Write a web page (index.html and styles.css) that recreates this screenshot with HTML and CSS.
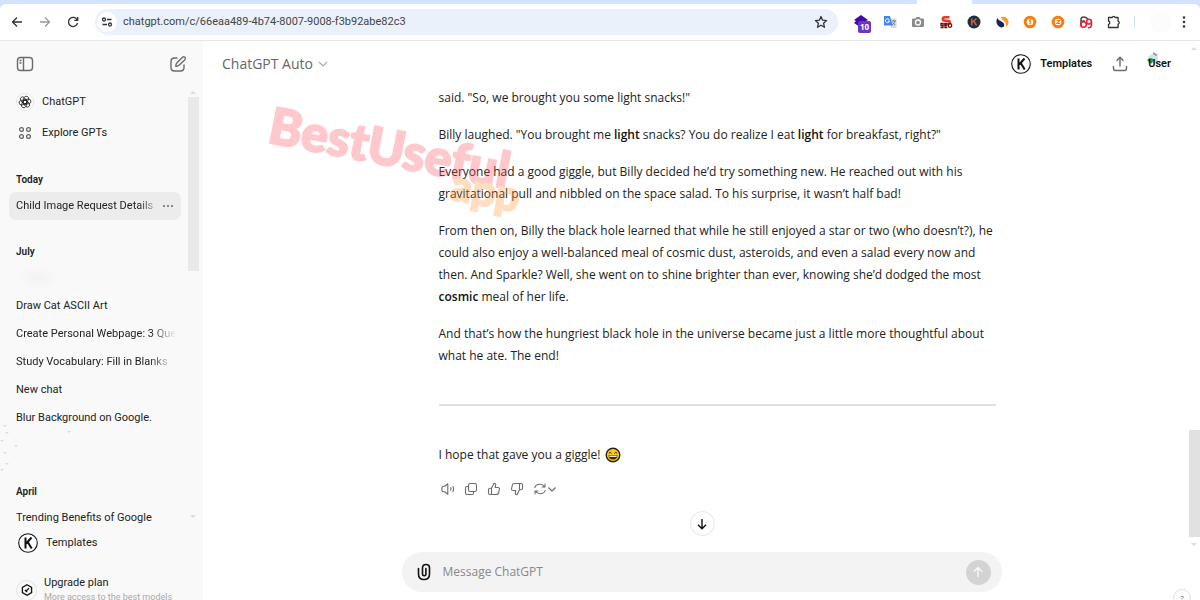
FILE: index.html
```html
<!DOCTYPE html>
<html lang="en">
<head>
<meta charset="utf-8">
<title>ChatGPT</title>
<link rel="stylesheet" href="styles.css">
</head>
<body>
<header class="browser">
  <div class="tabstrip"><span class="tab"></span></div>
  <div class="toolbar">
    <button class="tool" aria-label="Back"><svg width="12" height="12" viewBox="0 0 12 12"><path class="ln" d="M11 6H1.5M6 1.5 1.5 6 6 10.5"/></svg></button>
    <button class="tool dim" aria-label="Forward"><svg width="12" height="12" viewBox="0 0 12 12"><path class="ln" d="M1 6h9.500M6 1.500 10.500 6 6 10.500"/></svg></button>
    <button class="tool" aria-label="Reload"><svg width="12" height="12" viewBox="0 0 12 12"><path class="ln" d="M10.300 4A4.600 4.600 0 1 0 10.600 7M10.700 1v3.400H7.300"/></svg></button>
    <div class="address">
      <button class="site" aria-label="Site information"><svg width="12" height="12" viewBox="0 0 12 12"><g class="ln"><circle cx="3" cy="3.500" r="1.500"/><path d="M6 3.500h4.500M1.500 8.500H6"/><circle cx="9" cy="8.500" r="1.500"/></g></svg></button>
      <input class="url" type="text" aria-label="Address" value="chatgpt.com/c/66eaa489-4b74-8007-9008-f3b92abe82c3">
      <button class="star" aria-label="Bookmark"><svg width="14" height="14" viewBox="0 0 14 14"><path class="ln" d="m7 1.500 1.600 3.700 4 .4-3 2.700.9 4L7 10.200l-3.500 2.100.9-4-3-2.700 4-.4z"/></svg></button>
    </div>
    <div class="extensions">
      <button class="ext" aria-label="Layers, 10"><svg width="20" height="20" viewBox="0 0 20 20"><path fill="#4109a8" d="m9 3 7 5-2 1 2 2-8 4-6-4 2-2-2-1z"/></svg><span class="badge">10</span></button>
      <button class="ext" aria-label="Translate"><svg width="14" height="14" viewBox="0 0 14 14"><path fill="#d5d8dc" d="M6 3.500h7.500V13H8z"/><path fill="#4285f4" d="M1 1h6l2.500 9.500H1z"/><path d="M6.300 4.800A2 2 0 1 0 6.500 6H4.800" fill="none" stroke="#fff"/><path d="M8.500 6H13M10.700 5v1M12 6c-.5 2-2 3.500-3 4M9.700 7.500c.5 1 1.500 2 2.500 2.500" fill="none" stroke="#5f7390" stroke-width=".8"/></svg></button>
      <button class="ext" aria-label="Screenshot"><svg width="14" height="14" viewBox="0 0 14 14"><path fill="#8c8c8c" d="M2 3.500h2.500L5.500 2h3l1 1.500H12q1 0 1 1V11q0 1-1 1H2q-1 0-1-1V4.500q0-1 1-1z"/><circle cx="7" cy="7.500" r="2.500" fill="#8c8c8c" stroke="#fff" stroke-width="1.300"/></svg></button>
      <button class="ext" aria-label="SEO"><svg width="14" height="14" viewBox="0 0 14 14"><path d="M10.500 2.300H6Q3.800 2.300 3.800 4T6 5.800h2.500q2.200 0 2.200 1.700T8.500 9.200H3.500" fill="none" stroke="#e23a2c" stroke-width="2.600"/><path d="M4.300 8.500H2v2h2v2H1.500M8.300 8.500H6v4h2.300M6 10.500h2" fill="none" stroke="#5d1510" stroke-width="1.300"/><circle cx="11" cy="10.500" r="1.800" fill="none" stroke="#5d1510" stroke-width="1.300"/></svg></button>
      <button class="ext" aria-label="Keywords"><svg width="14" height="14" viewBox="0 0 14 14"><circle cx="7" cy="7" r="6.500" fill="#22303d"/><path d="M4.800 3.500v7M9.500 3.500 5.300 7.300M6.800 6l2.700 4.500" fill="none" stroke="#d0574b" stroke-width="1.500"/></svg></button>
      <button class="ext" aria-label="Traffic"><svg width="14" height="14" viewBox="0 0 14 14"><path fill="#192454" d="M2.500 3Q0 7 3 10.500t6 1Q10 8 6.500 6.500T2.500 3z"/><path fill="#fb9a1d" d="M6 2q5-1.500 7 3t-2.500 7Q12 8 9 6T6 2z"/></svg></button>
      <button class="ext" aria-label="Counter 1"><svg width="14" height="14" viewBox="0 0 14 14"><circle cx="7" cy="7" r="4.800" fill="#fff" stroke="#fb7b0b" stroke-width="3"/><path d="m6 6 1.200-1v4.500" fill="none" stroke="#fb7b0b" stroke-width="1.200"/></svg></button>
      <button class="ext" aria-label="Counter 2"><svg width="14" height="14" viewBox="0 0 14 14"><circle cx="7" cy="7" r="4.800" fill="#fff" stroke="#fb7b0b" stroke-width="3"/><path d="M5.500 5.500h3L6 8.500h3" fill="none" stroke="#fb7b0b" stroke-width="1.200"/></svg></button>
      <button class="ext" aria-label="Marks"><svg width="14" height="14" viewBox="0 0 14 14"><path d="M2 11V4.500Q2 2 4.500 2T9 4" fill="none" stroke="#55414a" stroke-width="1.500"/><circle cx="4.500" cy="9.500" r="2.800" fill="none" stroke="#eb1d32" stroke-width="1.500"/><circle cx="10" cy="6.700" r="2.400" fill="none" stroke="#eb1d32" stroke-width="1.500"/><path d="M2 6h4" stroke="#55414a" stroke-width="1.300"/><path d="M12.500 6v4q0 2.800-3.500 2.700" fill="none" stroke="#eb1d32" stroke-width="1.500"/></svg></button>
      <button class="ext" aria-label="Extensions"><svg width="14" height="14" viewBox="0 0 14 14"><path class="ln" d="M1.500 2.500h3.700a1.500 1.500 0 0 1 2.900 0h3v3.700a1.500 1.500 0 0 1 0 2.900v3.400H1.500V9.300a1.700 1.700 0 0 0 0-3.300z"/></svg></button>
    </div>
    <span class="rule"></span>
    <button class="profile" aria-label="Profile"></button>
    <button class="tool menu" aria-label="Menu"><svg width="4" height="14" viewBox="0 0 4 14"><g fill="#333"><circle cx="2" cy="2.500" r="1.300"/><circle cx="2" cy="7" r="1.300"/><circle cx="2" cy="11.500" r="1.300"/></g></svg></button>
  </div>
</header>
<div class="app">
  <aside class="sidebar">
    <div class="side-head">
      <button aria-label="Close sidebar"><svg width="18" height="18" viewBox="0 0 18 18"><g class="ln grey"><rect x="1.500" y="2.500" width="15" height="13" rx="3"/><path d="M7.500 2.500v13M3.500 5.500h2M3.500 8h2"/></g></svg></button>
      <button aria-label="New chat"><svg width="18" height="18" viewBox="0 0 18 18"><g class="ln grey"><path d="M8.500 3H5.500Q2 3 2 6.500v6Q2 16 5.500 16h6q3.500 0 3.500-3.500V9.500"/><path d="M6.800 11.200q0-2.200 1-3.200L13.500 2.300a1.700 1.700 0 0 1 2.400 2.400L10 10.300q-1 1-3.200.9z"/></g></svg></button>
    </div>
    <nav class="history">
      <a class="link" href="#"><span class="logo"><svg width="14" height="14" viewBox="0 0 14 14"><g fill="none" stroke="#222" stroke-width=".8"><rect id="p" x="4.700" y="1" width="4.600" height="7.800" rx="2.300" transform="rotate(20 7 7)"/><use href="#p" transform="rotate(60 7 7)"/><use href="#p" transform="rotate(120 7 7)"/><use href="#p" transform="rotate(180 7 7)"/><use href="#p" transform="rotate(240 7 7)"/><use href="#p" transform="rotate(300 7 7)"/></g></svg></span>ChatGPT</a>
      <a class="link" href="#"><span class="grid"><svg width="14" height="14" viewBox="0 0 14 14"><g fill="none" stroke="#5d5d5d" stroke-width="1.200"><circle cx="3.500" cy="3.500" r="1.900"/><circle cx="10.500" cy="3.500" r="1.900"/><circle cx="3.500" cy="10.500" r="1.900"/><circle cx="10.500" cy="10.500" r="1.900"/></g></svg></span>Explore GPTs</a>
      <section class="group">
        <h3>Today</h3>
        <div class="chat active"><a class="fade" href="#">Child Image Request Details</a><button aria-label="Options"><svg width="12" height="4" viewBox="0 0 12 4"><g fill="#666"><circle cx="2" cy="2" r="1"/><circle cx="6" cy="2" r="1"/><circle cx="10" cy="2" r="1"/></g></svg></button></div>
      </section>
      <section class="group">
        <h3>July</h3>
        <div class="chat"><span class="smudge"></span></div>
        <div class="chat"><a href="#">Draw Cat ASCII Art</a></div>
        <div class="chat"><a class="fade" href="#">Create Personal Webpage: 3 Que</a></div>
        <div class="chat"><a class="fade" href="#">Study Vocabulary: Fill in Blanks</a></div>
        <div class="chat"><a href="#">New chat</a></div>
        <div class="chat"><a href="#">Blur Background on Google.</a></div>
        <div class="chat"><svg class="specks" width="120" height="50" viewBox="0 0 120 50"><g fill="#dcdcdc"><path d="M3 4h4l-2 2zM5 11h4l-2 2zM0 19h4l-2 2zM14 24h4l-2 2zM3 31h4l-2 2zM5 42h4l-2 2zM0 48h4l-2 2zM67 10h4l-2 2z"/></g></svg></div>
      </section>
      <section class="group">
        <h3>April</h3>
        <div class="chat"><a href="#">Trending Benefits of Google</a></div>
      </section>
      <span class="side-up"></span><span class="side-thumb"></span><span class="side-down"></span>
    </nav>
    <div class="side-foot">
      <a class="foot-link" href="#"><svg width="20" height="20" viewBox="0 0 20 20"><circle cx="10" cy="10" r="9.300" fill="#fff" stroke="#111" stroke-width="1.100"/><path d="M7.500 4.500v11M13.500 4.500 8.300 10.500M9.700 9l4 6.500" fill="none" stroke="#111" stroke-width="2"/></svg>Templates</a>
      <a class="plan" href="#"><span class="plan-icon"><svg width="12" height="12" viewBox="0 0 12 12"><path d="m6 .8 4.600 2.600v5.200L6 11.200 1.400 8.600V3.400z" fill="none" stroke="#111" stroke-width="1.300"/><path d="M4.500 7.500 8 4.200M3.800 5.800l2.400 2.400" fill="none" stroke="#111" stroke-width="1.200"/></svg></span><span><b>Upgrade plan</b><small>More access to the best models</small></span></a>
    </div>
  </aside>
  <main class="main">
    <div class="top">
      <button class="model">ChatGPT Auto<svg width="10" height="10" viewBox="0 0 10 10"><path d="m1 3 4 4 4-4" fill="none" stroke="#aaa" stroke-width="1.200"/></svg></button>
      <div class="top-right">
        <button class="templates"><svg width="20" height="20" viewBox="0 0 20 20"><circle cx="10" cy="10" r="9.300" fill="#fff" stroke="#111" stroke-width="1.100"/><path d="M7.500 4.500v11M13.500 4.500 8.300 10.500M9.700 9l4 6.500" fill="none" stroke="#111" stroke-width="2"/></svg>Templates</button>
        <button aria-label="Share"><svg width="16" height="16" viewBox="0 0 16 16"><path class="ln grey" d="M8 10.500v-9M4.500 4.700 8 1.200l3.500 3.500M1.500 10v2.500q0 2 2 2h9q2 0 2-2V10"/></svg></button>
        <button class="user"><svg width="14" height="14" viewBox="0 0 14 14"><path fill="#cfe2f6" d="M2 6q5-6 10 0v6H2z"/><path fill="#999" d="m7 1 5 3-2 1-3-2z"/><path fill="#2e9a3a" d="M1 9q4-4 7 0l-3 4z"/></svg>User</button>
      </div>
    </div>
    <div class="watermark" aria-hidden="true"><span>BestUseful</span><span class="sub">app</span></div>
    <article class="thread">
      <p>said. "So, we brought you some light snacks!"</p>
      <p>Billy laughed. "You brought me <strong>light</strong> snacks? You do realize I eat <strong>light</strong> for breakfast, right?"</p>
      <p>Everyone had a good giggle, but Billy decided he’d try something new. He reached out with his<br>gravitational pull and nibbled on the space salad. To his surprise, it wasn’t half bad!</p>
      <p>From then on, Billy the black hole learned that while he still enjoyed a star or two (who doesn’t?), he<br>could also enjoy a well-balanced meal of cosmic dust, asteroids, and even a salad every now and<br>then. And Sparkle? Well, she went on to shine brighter than ever, knowing she’d dodged the most<br><strong>cosmic</strong> meal of her life.</p>
      <p>And that’s how the hungriest black hole in the universe became just a little more thoughtful about<br>what he ate. The end!</p>
      <hr>
      <p class="closing">I hope that gave you a giggle! <svg width="16" height="16" viewBox="0 0 16 16" role="img" aria-label="Grinning face"><circle cx="8" cy="8" r="6.800" fill="#fcc821" stroke="#2b2410" stroke-width="1.400"/><path d="M3.500 8.300h9q0 4.200-4.500 4.200T3.500 8.300z" fill="#3b2a18"/><path d="M4.300 8.700h7.400v1.200H4.300z" fill="#fff"/><path d="M3.800 6.300q1.400-1.800 2.800 0M9.400 6.300q1.400-1.800 2.800 0" fill="none" stroke="#3b2a18"/></svg></p>
      <div class="actions">
        <button aria-label="Read aloud"><svg width="14" height="14" viewBox="0 0 14 14"><path class="ln thin" d="M6.800 1.800v10.400L3.700 9.800H2.500Q.8 9.800.8 7t1.700-2.800h1.200zM9.500 5.300q.9 1.700 0 3.400M11.700 4q1.700 3 0 6"/></svg></button>
        <button aria-label="Copy"><svg width="14" height="14" viewBox="0 0 14 14"><g class="ln thin"><rect x="4.500" y="1.500" width="8" height="8" rx="1.800"/><path d="M4.500 4.500H3q-1.500 0-1.500 1.500v5q0 1.500 1.500 1.500h5q1.500 0 1.500-1.500V9.500"/></g></svg></button>
        <button aria-label="Good response"><svg width="14" height="14" viewBox="0 0 14 14"><path class="ln thin" d="M4.500 6.200 7 1.300q2 .2 1.700 2L8.200 5.500h2.600q2 0 1.600 2l-.8 3.500q-.4 1.500-2 1.500H3Q1.500 12.500 1.500 11V7.700q0-1.500 1.500-1.500h1.500v6.300"/></svg></button>
        <button aria-label="Bad response"><svg width="14" height="14" viewBox="0 0 14 14"><path class="ln thin" d="M9.500 7.800 7 12.700q-2-.2-1.700-2l.5-2.200H3.200q-2 0-1.600-2L2.400 3q.4-1.500 2-1.500H11q1.500 0 1.500 1.500v3.300q0 1.500-1.500 1.500H9.500V1.500"/></svg></button>
        <button class="regen" aria-label="Regenerate"><svg width="14" height="14" viewBox="0 0 14 14"><path class="ln thin" d="M1.700 6Q2.500 2.300 7 2.300q3 0 4.700 2.700M12 1.700V5H8.700M12.300 8q-.8 3.700-5.300 3.700-3 0-4.700-2.700M2 12.300V9h3.300"/></svg><svg width="10" height="10" viewBox="0 0 10 10"><path class="ln thin" d="m1.500 3.500 3.500 3.500 3.500-3.500"/></svg></button>
      </div>
    </article>
    <div class="bottom">
      <button class="down" aria-label="Scroll to bottom"><svg width="12" height="12" viewBox="0 0 12 12"><path d="M6 1v9.500M2 6.800l4 4 4-4" fill="none" stroke="#111" stroke-width="1.400"/></svg></button>
      <form class="composer">
        <button type="button" aria-label="Attach"><svg width="14" height="18" viewBox="0 0 14 18"><path d="M1.500 5.500V11q0 5.500 5.500 5.500t5.500-5.500V5q0-3.500-3.500-3.500T5.500 5v6q0 1.700 1.700 1.700T8.900 11V5.500" fill="none" stroke="#111" stroke-width="1.600" stroke-linecap="round"/></svg></button>
        <input type="text" aria-label="Message" placeholder="Message ChatGPT">
        <button class="send" type="button" aria-label="Send"><svg width="12" height="12" viewBox="0 0 12 12"><path d="M6 11V1.500M1.800 5.700 6 1.500l4.200 4.200" fill="none" stroke="#f8f8f8" stroke-width="1.500"/></svg></button>
      </form>
    </div>
    <span class="scroll-up"></span><span class="main-thumb"></span><span class="scroll-down"></span>
    <button class="help">?</button>
  </main>
</div>
</body>
</html>
```
FILE: styles.css
```css
* { box-sizing: border-box; }
body { margin: 0; height: 100vh; display: flex; flex-direction: column; overflow: hidden; font: 12px/22px "Open Sans", "Noto Sans", sans-serif; color: #222; background: #fff; }
button { border: 0; padding: 0; background: none; font: inherit; color: inherit; display: flex; align-items: center; justify-content: center; }
input { border: 0; padding: 0; background: none; font: inherit; color: inherit; min-width: 0; flex: 1; outline: 0; }
a { color: inherit; text-decoration: none; }
svg { display: block; flex: none; }
h3, p { margin: 0; }
.ln { fill: none; stroke: #333; stroke-width: 1.3; stroke-linejoin: round; }
.grey { stroke: #6b6b6b; stroke-width: 1.4; }
.thin { stroke: #6b6b6b; stroke-width: 1.1; }

.browser { background: #d3e3fd; border-bottom: 1px solid #e6e7e9; }
.tabstrip { height: 4px; display: flex; justify-content: flex-end; padding-right: 228px; }
.tab { width: 55px; background: #fff; }
.toolbar { height: 36px; display: flex; align-items: center; background: #fff; border-radius: 6px 6px 0 0; padding: 0 14px 0 11px; }
.tool { width: 12px; margin-right: 16px; }
.dim { opacity: .5; }
.address { flex: 1; height: 26px; display: flex; align-items: center; background: #ebf1fb; border-radius: 13px; padding: 0 10px 0 2px; }
.site { width: 20px; height: 20px; border-radius: 50%; background: #fff; }
.url { font-family: Roboto, sans-serif; font-size: 11px; margin-left: 6px; color: #444; }
.extensions { display: flex; gap: 8px; margin-left: 14px; }
.ext { width: 20px; height: 20px; position: relative; }
.badge { position: absolute; left: 6px; top: 9px; width: 13px; height: 12px; border-radius: 2px; background: #6a35c2; color: #fff; font: 700 8px/12px "Open Sans", sans-serif; text-align: center; }
.rule { width: 1px; height: 12px; background: #cfe0f8; margin-left: 10px; }
.profile { width: 22px; height: 22px; border-radius: 50%; background: #fcfcfc; margin: 0 10px 0 15px; }
.menu { width: 4px; margin: 0; }

.app { flex: 1; min-height: 0; display: flex; }
.sidebar { width: 203px; flex: none; display: flex; flex-direction: column; background: #f9f9f9; font-family: Roboto, sans-serif; font-size: 11px; line-height: 16px; }
.side-head { height: 45px; display: flex; align-items: center; justify-content: space-between; padding: 0 16px; }
.history { flex: 1; min-height: 0; overflow: hidden; position: relative; padding: 0 22px 0 9px; }
.link { height: 31px; display: flex; align-items: center; gap: 8px; padding-left: 7px; }
.logo, .grid { width: 18px; height: 18px; display: grid; place-items: center; border-radius: 50%; }
.logo { border: 1px solid #e5e5e5; background: #fff; }
.group { padding-top: 18px; }
.group h3 { font-size: 10px; font-weight: 600; line-height: 20px; padding: 4px 7px 2px; }
.chat { height: 28px; display: flex; align-items: center; padding: 0 7px; border-radius: 7px; white-space: nowrap; }
.active { background: #ececec; }
.active button { width: 14px; margin-left: 8px; }
.fade { flex: 1; mask-image: linear-gradient(90deg, #000 84%, transparent); }
.active .fade { mask-image: linear-gradient(90deg, #000 90%, transparent 105%); }
.specks { margin-left: -16px; }
.smudge { width: 44px; height: 26px; background: radial-gradient(#f3f3f3, #f9f9f9 70%); }
.side-thumb { position: absolute; right: 4px; top: 11px; width: 11px; height: 174px; background: #e9e9e9; }
.side-foot { flex: 0 0 77px; overflow: hidden; }
.foot-link { height: 40px; display: flex; align-items: center; gap: 8px; padding-left: 18px; }
.plan { display: flex; align-items: center; gap: 7px; padding: 13px 0 0 16px; }
.plan-icon { width: 21px; height: 21px; display: grid; place-items: center; border: 1px solid #e3e3e3; border-radius: 50%; flex: none; }
.plan b, .plan small { display: block; font-weight: 400; line-height: 14px; white-space: nowrap; }
.plan small { font-size: 9px; color: #aaa; }

.main { flex: 1; min-width: 0; position: relative; display: flex; flex-direction: column; }
.top { height: 46px; flex: none; display: flex; align-items: center; justify-content: space-between; padding: 0 29px 0 19px; }
.model { gap: 5px; font-size: 14px; font-weight: 500; color: #666; }
.top-right { display: flex; align-items: center; gap: 20px; font: 600 11px/22px Roboto, sans-serif; color: #111; }
.templates { gap: 9px; }
.user { position: relative; }
.user svg { position: absolute; left: -2px; top: -2px; z-index: -1; }
.thread { flex: 1; min-height: 0; width: 600px; max-width: 100%; margin: 0 auto; padding: 0 6px 0 37px; white-space: nowrap; }
.thread p { margin-bottom: 15px; }
.thread strong { font-weight: 600; color: #111; }
.thread hr { border: 0; height: 2px; background: #e0e0e0; margin: 37px 0 38px; }
.closing { display: flex; align-items: center; gap: 5px; }
.thread .closing { margin-bottom: 16px; }
.actions { display: flex; gap: 9px; margin-left: 2px; }
.bottom { position: relative; width: 600px; max-width: 100%; margin: 0 auto 8px; }
.down { position: absolute; left: 50%; bottom: 56px; width: 25px; height: 25px; margin-left: -12px; border: 1px solid #e5e5e5; border-radius: 50%; background: #fff; }
.composer { height: 40px; display: flex; align-items: center; gap: 12px; padding: 0 11px 0 15px; border-radius: 20px; background: #f3f3f3; }
.composer input::placeholder { color: #888; opacity: 1; }
.send { width: 25px; height: 25px; border-radius: 50%; background: #d3d3d3; }
.main-thumb { position: absolute; right: 0; bottom: 63px; width: 11px; height: 107px; background: #e1e1e1; }
.scroll-up, .scroll-down, .side-up, .side-down { position: absolute; right: 3px; border: 3px solid transparent; border-top: 0; border-bottom-color: #ddd; }
.scroll-up { top: 6px; }
.scroll-down { bottom: 54px; transform: rotate(180deg); }
.side-up { right: 7px; top: 5px; }
.side-down { right: 7px; bottom: 5px; transform: rotate(180deg); }
.help { position: absolute; right: 9px; bottom: -7px; width: 18px; height: 18px; border: 1px solid #e0dde3; border-radius: 50%; font-size: 8px; color: #666; }
.watermark { position: absolute; left: 62px; top: 55px; transform: rotate(11deg); transform-origin: 0 100%; font: 900 50px/54px Lato, sans-serif; color: #ff4c58; -webkit-text-stroke: 2px currentColor; opacity: .3; z-index: 2; pointer-events: none; }
.watermark .sub { position: absolute; right: -15px; top: 24px; font-size: 42px; color: #ff9632; }
```
